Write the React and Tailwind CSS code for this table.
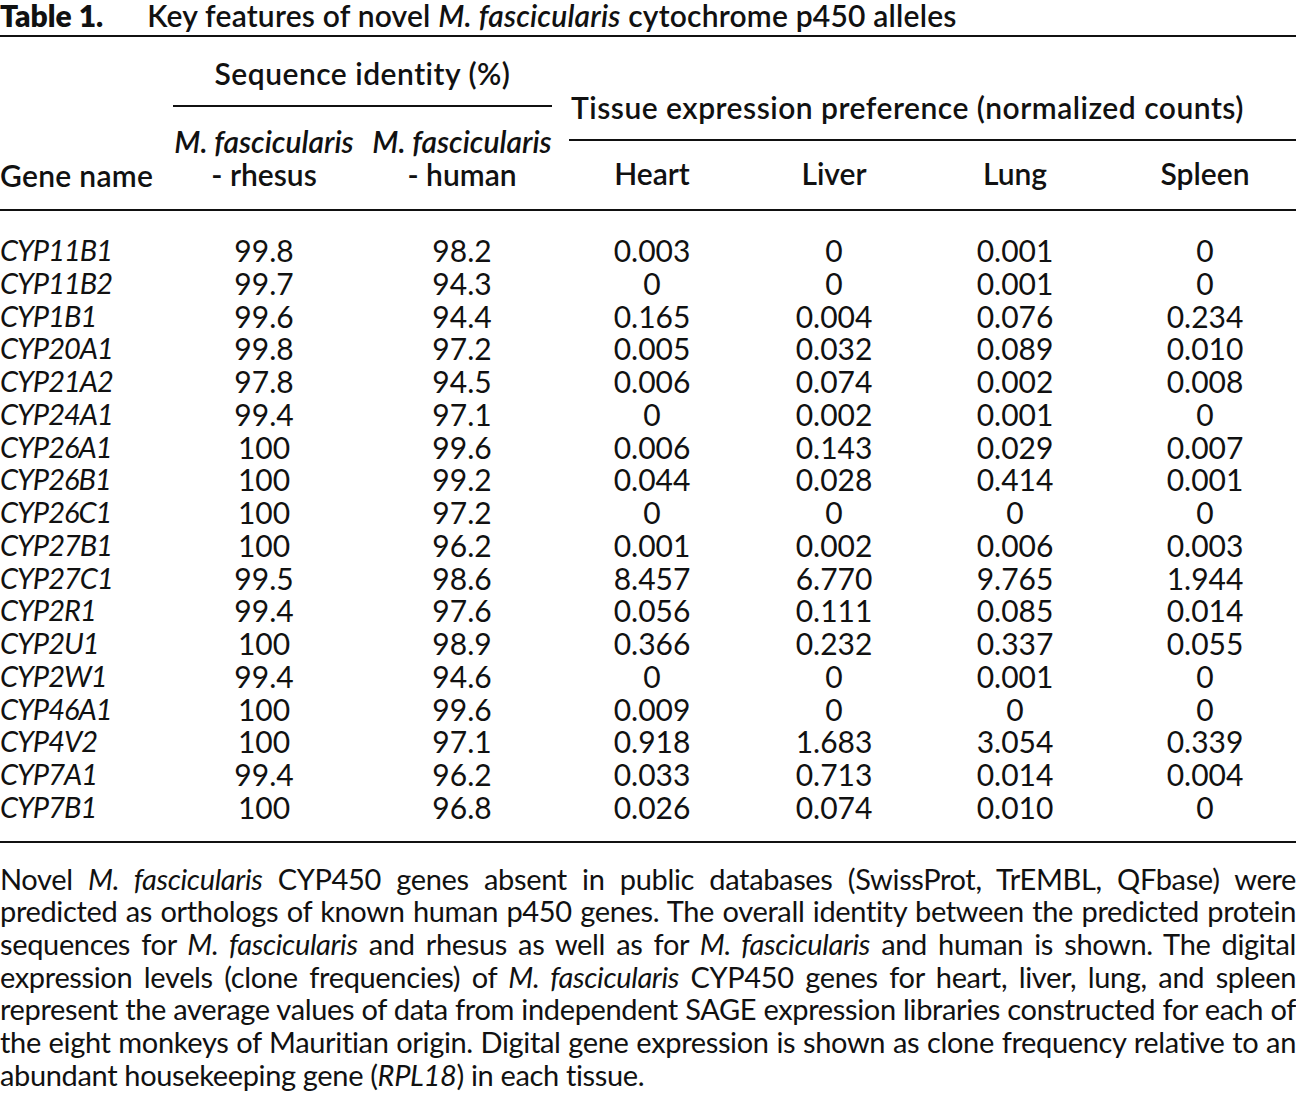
const rows = [
  ["CYP11B1", "99.8", "98.2", "0.003", "0", "0.001", "0"],
  ["CYP11B2", "99.7", "94.3", "0", "0", "0.001", "0"],
  ["CYP1B1", "99.6", "94.4", "0.165", "0.004", "0.076", "0.234"],
  ["CYP20A1", "99.8", "97.2", "0.005", "0.032", "0.089", "0.010"],
  ["CYP21A2", "97.8", "94.5", "0.006", "0.074", "0.002", "0.008"],
  ["CYP24A1", "99.4", "97.1", "0", "0.002", "0.001", "0"],
  ["CYP26A1", "100", "99.6", "0.006", "0.143", "0.029", "0.007"],
  ["CYP26B1", "100", "99.2", "0.044", "0.028", "0.414", "0.001"],
  ["CYP26C1", "100", "97.2", "0", "0", "0", "0"],
  ["CYP27B1", "100", "96.2", "0.001", "0.002", "0.006", "0.003"],
  ["CYP27C1", "99.5", "98.6", "8.457", "6.770", "9.765", "1.944"],
  ["CYP2R1", "99.4", "97.6", "0.056", "0.111", "0.085", "0.014"],
  ["CYP2U1", "100", "98.9", "0.366", "0.232", "0.337", "0.055"],
  ["CYP2W1", "99.4", "94.6", "0", "0", "0.001", "0"],
  ["CYP46A1", "100", "99.6", "0.009", "0", "0", "0"],
  ["CYP4V2", "100", "97.1", "0.918", "1.683", "3.054", "0.339"],
  ["CYP7A1", "99.4", "96.2", "0.033", "0.713", "0.014", "0.004"],
  ["CYP7B1", "100", "96.8", "0.026", "0.074", "0.010", "0"],
];

const grid = "grid grid-cols-[173px_182px_214px_166px_198px_164px_199px]";

function Sp({ children }) {
  return <i>{children}</i>;
}

// each caption line is justified on its own so the breaks match the print
function Line({ children, last }) {
  return (
    <div
      className={
        last
          ? "whitespace-nowrap"
          : "whitespace-nowrap text-justify [text-align-last:justify]"
      }
    >
      {children}
    </div>
  );
}

export default function App() {
  return (
    <main className="w-[1296px] overflow-hidden bg-white text-[#111] font-['Lato','Open_Sans',sans-serif]">
      <h1 className="whitespace-nowrap text-[30px] font-semibold leading-[30px]">
        <span className="font-extrabold">Table 1.</span>
        <span className="ml-[44px] tracking-[0.2px]">
          Key features of novel <Sp>M. fascicularis</Sp> cytochrome p450 alleles
        </span>
      </h1>
      <div className="mt-[5px] h-[2px] bg-[#111]" />

      <div className="flex h-[172px] text-[30px] font-semibold leading-[33px]">
        <div className="flex w-[173px] flex-col justify-end pb-[17px] tracking-[0.3px]">Gene name</div>
        <div className="flex w-[396px] flex-col pt-[20px]">
          <div className="w-[379px] text-center tracking-[0.5px]">Sequence identity (%)</div>
          <div className="mt-[15px] h-[2px] w-[379px] bg-[#111]" />
          <div className="mt-[18px] grid grid-cols-[182px_214px]">
            <div className="text-center">
              <Sp>M. fascicularis</Sp>
              <br />- rhesus
            </div>
            <div className="text-center">
              <Sp>M. fascicularis</Sp>
              <br />- human
            </div>
          </div>
        </div>
        <div className="flex flex-1 flex-col pt-[54px]">
          <div className="whitespace-nowrap pl-[2px] tracking-[0.5px]">Tissue expression preference (normalized counts)</div>
          <div className="mt-[15px] h-[2px] bg-[#111]" />
          <div className="mt-[16px] grid grid-cols-[166px_198px_164px_199px]">
            <div className="text-center">Heart</div>
            <div className="text-center">Liver</div>
            <div className="text-center">Lung</div>
            <div className="pl-[17px] text-center">Spleen</div>
          </div>
        </div>
      </div>
      <div className="h-[2px] bg-[#111]" />

      <div className="pt-[23px] pb-[17px] text-[30px] leading-[32.75px]">
        {rows.map((r) => (
          <div key={r[0]} className={grid}>
            <div className="text-[29px] italic tracking-[-1px]">{r[0]}</div>
            <div className="text-center">{r[1]}</div>
            <div className="text-center">{r[2]}</div>
            <div className="text-center">{r[3]}</div>
            <div className="text-center">{r[4]}</div>
            <div className="text-center">{r[5]}</div>
            <div className="pl-[17px] text-center">{r[6]}</div>
          </div>
        ))}
      </div>
      <div className="h-[2px] bg-[#111]" />

      <div className="pt-[20px] text-[29px] leading-[32.7px] tracking-[-0.35px]">
        <Line>
          Novel <Sp>M. fascicularis</Sp> CYP450 genes absent in public databases (SwissProt, TrEMBL, QFbase) were
        </Line>
        <Line>
          predicted as orthologs of known human p450 genes. The overall identity between the predicted protein
        </Line>
        <Line>
          sequences for <Sp>M. fascicularis</Sp> and rhesus as well as for <Sp>M. fascicularis</Sp> and human is shown. The digital
        </Line>
        <Line>
          expression levels (clone frequencies) of <Sp>M. fascicularis</Sp> CYP450 genes for heart, liver, lung, and spleen
        </Line>
        <Line>
          represent the average values of data from independent SAGE expression libraries constructed for each of
        </Line>
        <Line>
          the eight monkeys of Mauritian origin. Digital gene expression is shown as clone frequency relative to an
        </Line>
        <Line last>
          abundant housekeeping gene (<Sp>RPL18</Sp>) in each tissue.
        </Line>
      </div>
    </main>
  );
}
